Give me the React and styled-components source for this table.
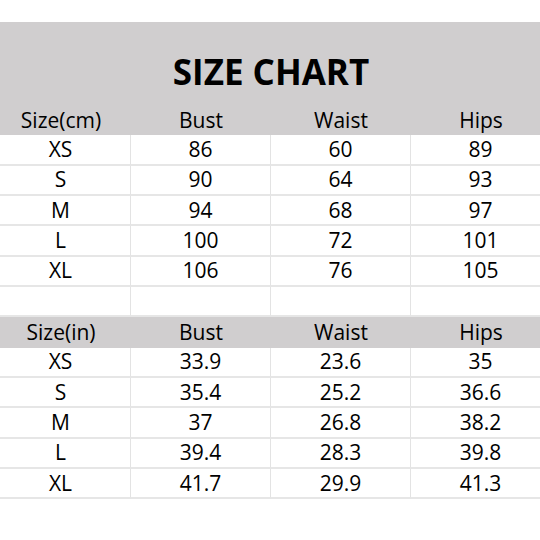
import React from "react";
import styled, { createGlobalStyle } from "styled-components";

const Global = createGlobalStyle`
  html, body { margin: 0; padding: 0; background: #ffffff; }
  body { font-family: "Open Sans", "Noto Sans", "DejaVu Sans", sans-serif; color: #000; }
`;

const Page = styled.div`
  width: 540px;
  height: 540px;
  overflow: hidden;
  background: #ffffff;
  padding-top: 22px;
  box-sizing: border-box;
`;

const Sheet = styled.div`
  width: 560px;
  margin-left: -9px;
`;

const TitleBar = styled.div`
  height: 83px;
  background: #d0cecf;
  display: flex;
  align-items: center;
  justify-content: center;
  padding-top: 16px;
  box-sizing: border-box;
`;

const Title = styled.h1`
  margin: 0;
  font-size: 35px;
  font-weight: 700;
  line-height: 1;
  letter-spacing: 0;
`;

const Grid = styled.div`
  display: grid;
  grid-template-columns: repeat(4, 140px);
  grid-auto-rows: 30.33px;
`;

const Cell = styled.div`
  display: flex;
  align-items: center;
  justify-content: center;
  font-size: 21px;
  line-height: 1;
  box-sizing: border-box;
  background: ${(p) => (p.$head ? "#d0cecf" : "#ffffff")};
  border-right: ${(p) => (p.$head ? "none" : "1.5px solid #e3e3e3")};
  border-bottom: ${(p) => (p.$head ? "none" : "2px solid #e6e6e6")};
`;

const cm = {
  head: ["Size(cm)", "Bust", "Waist", "Hips"],
  rows: [
    ["XS", "86", "60", "89"],
    ["S", "90", "64", "93"],
    ["M", "94", "68", "97"],
    ["L", "100", "72", "101"],
    ["XL", "106", "76", "105"],
  ],
};

const inch = {
  head: ["Size(in)", "Bust", "Waist", "Hips"],
  rows: [
    ["XS", "33.9", "23.6", "35"],
    ["S", "35.4", "25.2", "36.6"],
    ["M", "37", "26.8", "38.2"],
    ["L", "39.4", "28.3", "39.8"],
    ["XL", "41.7", "29.9", "41.3"],
  ],
};

function Section({ data }) {
  return (
    <>
      {data.head.map((h, i) => (
        <Cell $head key={"h" + i}>{h}</Cell>
      ))}
      {data.rows.map((r, ri) =>
        r.map((c, ci) => <Cell key={ri + "-" + ci}>{c}</Cell>)
      )}
    </>
  );
}

export default function App() {
  return (
    <>
      <Global />
      <Page>
        <Sheet>
          <TitleBar>
            <Title>SIZE CHART</Title>
          </TitleBar>
          <Grid>
            <Section data={cm} />
            {[0, 1, 2, 3].map((i) => (
              <Cell key={"e" + i} />
            ))}
            <Section data={inch} />
          </Grid>
        </Sheet>
      </Page>
    </>
  );
}
